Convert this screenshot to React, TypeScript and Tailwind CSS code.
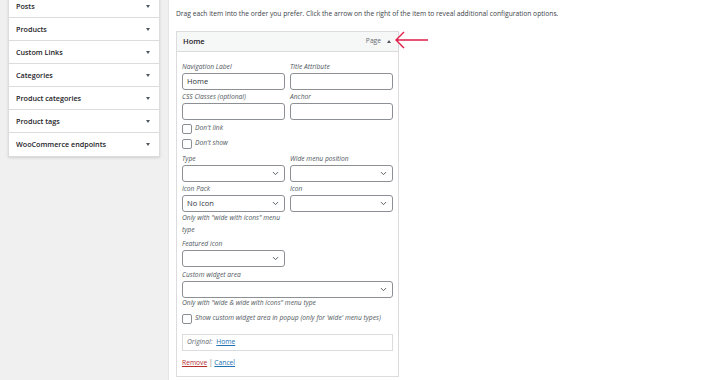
import { ChevronDown } from 'lucide-react'

const panels = ['Posts', 'Products', 'Custom Links', 'Categories', 'Product categories', 'Product tags', 'WooCommerce endpoints']

function Label({ text }: { text: string }) {
  return <span className="italic text-[6.7px] leading-[9px] h-[9px] text-[#50575e] mb-[2px]">{text}</span>
}

function Field({ label, value = '', className = '' }: { label: string; value?: string; className?: string }) {
  return (
    <div className={`flex flex-col ${className}`}>
      <Label text={label} />
      <div className="h-[17px] border border-[#8c8f94] rounded-[3px] bg-white px-[4px] flex items-center text-[7.5px] text-[#2c3338]">
        {value}
      </div>
    </div>
  )
}

function Select({ label, value = '', className = '' }: { label: string; value?: string; className?: string }) {
  return (
    <div className={`flex flex-col ${className}`}>
      <Label text={label} />
      <div className="h-[17px] border border-[#8c8f94] rounded-[3px] bg-white pl-[4px] pr-[4px] flex items-center justify-between text-[7.5px] text-[#2c3338]">
        <span>{value}</span>
        <ChevronDown size={9} strokeWidth={2.5} className="text-[#50575e]" />
      </div>
    </div>
  )
}

function Check({ label }: { label: string }) {
  return (
    <label className="h-[11px] flex items-center gap-[3px] italic text-[6.7px] text-[#50575e]">
      <span className="w-[10px] h-[10px] border border-[#8c8f94] rounded-[2px] bg-white" />
      {label}
    </label>
  )
}

export default function App() {
  return (
    <div className="w-[710px] h-[380px] flex bg-[#f0f0f1] overflow-hidden" style={{ fontFamily: '"Open Sans", "Noto Sans", sans-serif' }}>
      {/* Left accordion */}
      <div className="w-[168px] shrink-0 pl-[8px] pr-[8px]">
        <div className="-mt-[6px] bg-white border border-[#dcdcde] shadow-sm">
          {panels.map((p) => (
            <div key={p} className="h-[23px] flex items-center justify-between pl-[7px] pr-[9px] border-b border-[#dcdcde] last:border-b-0">
              <span className="text-[7.2px] font-semibold text-[#1d2327]">{p}</span>
              <span className="w-0 h-0 border-l-[2.5px] border-r-[2.5px] border-t-[3px] border-l-transparent border-r-transparent border-t-[#50575e]" />
            </div>
          ))}
        </div>
      </div>

      {/* Main */}
      <div className="flex-1 bg-white border-l border-[#e5e5e5] pl-[7px] pt-[9px]">
        <p className="text-[6.7px] text-[#3c434a] leading-[10px]">
          Drag each item into the order you prefer. Click the arrow on the right of the item to reveal additional configuration options.
        </p>
        <div className="relative mt-[12px] w-[223px]">
          <div className="h-[21px] bg-[#f6f7f7] border border-[#dcdcde] flex items-center justify-between pl-[6px] pr-[7px]">
            <span className="text-[7.5px] font-semibold text-[#1d2327]">Home</span>
            <div className="flex items-center gap-[6px]">
              <span className="text-[6.7px] text-[#646970]">Page</span>
              <span className="w-0 h-0 border-l-[2.5px] border-r-[2.5px] border-b-[3px] border-l-transparent border-r-transparent border-b-[#50575e]" />
            </div>
          </div>
          <svg className="absolute left-[218px] top-[-1px]" width="36" height="20" viewBox="0 0 36 20">
            <path d="M34 10 H3 M10 2 L2 10 L10 18" fill="none" stroke="#e11d48" strokeWidth="1.4" />
          </svg>
          <div className="border border-t-0 border-[#dcdcde] px-[5px] pt-[10px] pb-[8px] flex flex-col">
            <div className="grid grid-cols-2 gap-x-[5px]">
              <Field label="Navigation Label" value="Home" />
              <Field label="Title Attribute" />
            </div>
            <div className="grid grid-cols-2 gap-x-[5px] mt-[2px]">
              <Field label="CSS Classes (optional)" />
              <Field label="Anchor" />
            </div>
            <div className="mt-[3px] flex flex-col gap-[4px]">
              <Check label="Don't link" />
              <Check label="Don't show" />
            </div>
            <div className="grid grid-cols-2 gap-x-[5px] mt-[5px]">
              <Select label="Type" />
              <Select label="Wide menu position" />
            </div>
            <div className="grid grid-cols-2 gap-x-[5px] mt-[2px]">
              <Select label="Icon Pack" value="No Icon" />
              <Select label="Icon" />
            </div>
            <p className="italic text-[6.7px] leading-[12px] text-[#50575e] w-[104px]">Only with "wide with icons" menu type</p>
            <Select label="Featured icon" className="w-[103px] mt-[3px]" />
            <Select label="Custom widget area" className="mt-[3px]" />
            <p className="italic text-[6.7px] leading-[10px] text-[#50575e]">Only with "wide &amp; wide with icons" menu type</p>
            <div className="mt-[5px]">
              <Check label="Show custom widget area in popup (only for 'wide' menu types)" />
            </div>
            <div className="mt-[10px] h-[17px] border border-[#dcdcde] flex items-center px-[4px] gap-[4px] text-[6.7px]">
              <span className="italic text-[#646970]">Original:</span>
              <span className="text-[#2271b1] underline">Home</span>
            </div>
            <div className="mt-[7px] text-[6.7px] leading-[10px] text-[#646970]">
              <span className="text-[#b32d2e] underline">Remove</span> | <span className="text-[#2271b1] underline">Cancel</span>
            </div>
          </div>
        </div>
      </div>
    </div>
  )
}
